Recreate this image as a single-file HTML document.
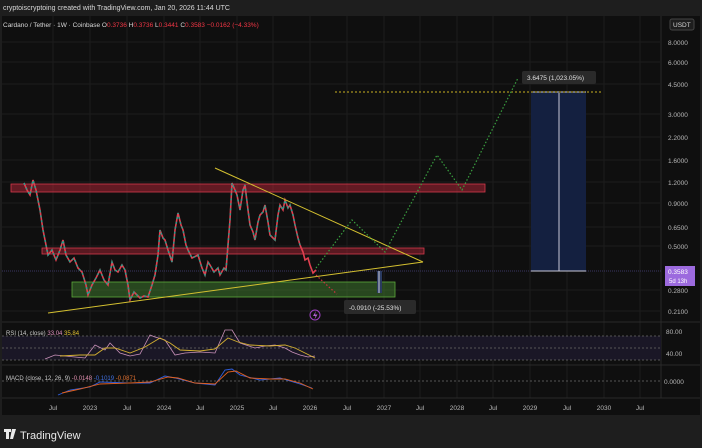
<!DOCTYPE html>
<html><head><meta charset="utf-8"><style>
body{margin:0;width:702px;height:448px;overflow:hidden;background:#1e1e1e;font-family:"Liberation Sans",sans-serif}
svg{display:block}
</style></head><body>
<svg width="702" height="448" viewBox="0 0 702 448" xmlns="http://www.w3.org/2000/svg" font-family="Liberation Sans, sans-serif">
<rect x="0" y="0" width="702" height="448" fill="#1e1e1e"/>
<text x="3" y="10" font-size="7" fill="#d8d8d8">cryptoiscryptoing created with TradingView.com, Jan 20, 2026 11:44 UTC</text>
<rect x="2" y="16" width="698" height="399" fill="#0f0f0f"/>
<g stroke="#1c1c1c" stroke-width="1">
<line x1="53" y1="16" x2="53" y2="398"/><line x1="90" y1="16" x2="90" y2="398"/><line x1="127" y1="16" x2="127" y2="398"/><line x1="164" y1="16" x2="164" y2="398"/><line x1="200" y1="16" x2="200" y2="398"/><line x1="237" y1="16" x2="237" y2="398"/><line x1="273" y1="16" x2="273" y2="398"/><line x1="310" y1="16" x2="310" y2="398"/><line x1="347" y1="16" x2="347" y2="398"/><line x1="384" y1="16" x2="384" y2="398"/><line x1="420" y1="16" x2="420" y2="398"/><line x1="457" y1="16" x2="457" y2="398"/><line x1="493" y1="16" x2="493" y2="398"/><line x1="530" y1="16" x2="530" y2="398"/><line x1="567" y1="16" x2="567" y2="398"/><line x1="604" y1="16" x2="604" y2="398"/><line x1="640" y1="16" x2="640" y2="398"/>
<line x1="2" y1="42" x2="660" y2="42"/><line x1="2" y1="62" x2="660" y2="62"/><line x1="2" y1="84" x2="660" y2="84"/><line x1="2" y1="114" x2="660" y2="114"/><line x1="2" y1="137" x2="660" y2="137"/><line x1="2" y1="160" x2="660" y2="160"/><line x1="2" y1="182" x2="660" y2="182"/><line x1="2" y1="203" x2="660" y2="203"/><line x1="2" y1="227" x2="660" y2="227"/><line x1="2" y1="246" x2="660" y2="246"/><line x1="2" y1="290" x2="660" y2="290"/><line x1="2" y1="311" x2="660" y2="311"/>
</g>
<line x1="2" y1="322" x2="700" y2="322" stroke="#2a2a2a"/>
<line x1="2" y1="365" x2="700" y2="365" stroke="#2a2a2a"/>
<line x1="2" y1="398" x2="700" y2="398" stroke="#2a2a2a"/>
<line x1="661" y1="16" x2="661" y2="398" stroke="#2a2a2a"/>
<text x="3" y="27" font-size="6.5" fill="#d8d8d8">Cardano / Tether · 1W · Coinbase  O<tspan fill="#f23645">0.3736</tspan>  H<tspan fill="#f23645">0.3736</tspan>  L<tspan fill="#f23645">0.3441</tspan>  C<tspan fill="#f23645">0.3583  −0.0162 (−4.33%)</tspan></text>
<rect x="670" y="19" width="24" height="11" rx="2" fill="#1e1e1e" stroke="#444"/>
<text x="673" y="27" font-size="6.5" fill="#d8d8d8">USDT</text>
<g font-size="6.5" fill="#b8b8b8">
<text x="668" y="45">8.0000</text><text x="668" y="65">6.0000</text><text x="668" y="87">4.5000</text><text x="668" y="117">3.0000</text><text x="668" y="140">2.2000</text><text x="668" y="163">1.6000</text><text x="668" y="185">1.2000</text><text x="668" y="206">0.9000</text><text x="668" y="230">0.6500</text><text x="668" y="249">0.5000</text><text x="668" y="293">0.2800</text><text x="668" y="314">0.2100</text>
<text x="666" y="334">80.00</text><text x="666" y="356">40.00</text><text x="664" y="384">0.0000</text>
</g>
<rect x="665" y="266" width="30" height="20" fill="#9c6ade"/>
<text x="668" y="274" font-size="6.5" fill="#fff">0.3583</text><text x="669" y="283" font-size="6" fill="#fff">5d 13h</text>
<line x1="2" y1="271" x2="661" y2="271" stroke="#3a3560" stroke-dasharray="1,1"/>
<rect x="11" y="184" width="474" height="8" fill="rgba(200,40,60,0.45)" stroke="#d4394b" stroke-width="0.8"/>
<rect x="42" y="248" width="382" height="6" fill="rgba(200,40,60,0.4)" stroke="#d4394b" stroke-width="0.8"/>
<rect x="72" y="282" width="323" height="15" fill="rgba(70,140,50,0.45)" stroke="#5caa3a" stroke-width="0.8"/>
<rect x="531" y="92" width="55" height="179" fill="#142040"/>
<line x1="559" y1="93" x2="559" y2="271" stroke="#c8c8d8" stroke-width="1"/>
<line x1="531" y1="92" x2="586" y2="92" stroke="#c8c8d8"/><line x1="531" y1="271" x2="586" y2="271" stroke="#c8c8d8"/>
<line x1="335" y1="92" x2="603" y2="92" stroke="#c8b020" stroke-dasharray="2,2"/>
<polyline fill="none" stroke="#e04050" stroke-width="1.6" points="24,183 27,190 30,195 33,180 36,190 40,210 43,230 45,240 48,255 52,250 56,260 60,250 63,240 66,255 70,262 74,258 78,268 82,272 86,285 88,295 92,285 96,278 100,270 104,280 108,285 112,262 115,270 118,272 122,265 125,270 128,285 130,300 134,292 140,298 144,296 148,297 152,285 155,275 158,255 160,230 163,238 165,240 168,250 172,262 175,230 178,213 181,225 183,230 186,245 188,250 192,258 198,255 202,268 205,275 208,262 210,265 214,272 218,268 220,275 224,268 226,270 228,245 230,220 232,183 235,190 237,195 240,210 243,190 245,185 248,210 250,225 253,232 255,240 258,222 260,215 263,212 265,205 268,222 270,235 273,238 275,240 278,215 280,205 283,210 285,200 288,208 290,205 293,215 295,225 298,238 300,245 303,252 305,260 308,258 310,265 313,273 316,270"/>
<polyline fill="none" stroke="#1fa38f" stroke-width="1.4" stroke-dasharray="2,3" points="24,183 27,190 30,195 33,180 36,190 40,210 43,230 45,240 48,255 52,250 56,260 60,250 63,240 66,255 70,262 74,258 78,268 82,272 86,285 88,295 92,285 96,278 100,270 104,280 108,285 112,262 115,270 118,272 122,265 125,270 128,285 130,300 134,292 140,298 144,296 148,297 152,285 155,275 158,255 160,230 163,238 165,240 168,250 172,262 175,230 178,213 181,225 183,230 186,245 188,250 192,258 198,255 202,268 205,275 208,262 210,265 214,272 218,268 220,275 224,268 226,270 228,245 230,220 232,183 235,190 237,195 240,210 243,190 245,185 248,210 250,225 253,232 255,240 258,222 260,215 263,212 265,205 268,222 270,235 273,238 275,240 278,215 280,205 283,210 285,200 288,208 290,205 293,215 295,225 298,238 300,245"/>
<line x1="215" y1="168" x2="423" y2="262" stroke="#d4c030" stroke-width="1"/>
<line x1="48" y1="313" x2="423" y2="262" stroke="#d4c030" stroke-width="1"/>
<polyline fill="none" stroke="#3aa040" stroke-width="1.2" stroke-dasharray="1.5,2" points="316,268 352,220 385,252 437,155 462,190 518,78"/>
<polyline fill="none" stroke="#d03040" stroke-width="1.2" stroke-dasharray="1.5,2" points="316,275 330,288 337,294"/>
<rect x="377" y="271" width="5" height="22" fill="#2a3a60"/>
<line x1="379" y1="271" x2="379" y2="293" stroke="#d0d0e0"/>
<rect x="344" y="300" width="72" height="14" rx="2" fill="#2a2a2a"/>
<text x="349" y="310" font-size="6.5" fill="#e0e0e0">-0.0910 (-25.53%)</text>
<rect x="522" y="71" width="74" height="13" rx="2" fill="#2a2a2a"/>
<text x="527" y="80" font-size="6.5" fill="#e0e0e0">3.6475 (1,023.05%)</text>
<circle cx="315" cy="315" r="5" fill="none" stroke="#9c40c0" stroke-width="1"/>
<path d="M316 311l-3 5h2.5l-1 3.5 3-5h-2.5z" fill="#b060d0"/>
<rect x="2" y="336" width="659" height="24" fill="#1a1726"/>
<g stroke="#555" stroke-dasharray="2,2"><line x1="2" y1="336" x2="661" y2="336"/><line x1="2" y1="348" x2="661" y2="348"/><line x1="2" y1="360" x2="661" y2="360"/><line x1="2" y1="381" x2="661" y2="381"/></g>
<text x="6" y="335" font-size="6" fill="#c8c8c8">RSI (14, close) <tspan fill="#e090c0">33.04</tspan> <tspan fill="#e0c030">35.84</tspan></text>
<polyline fill="none" stroke="#c890b8" stroke-width="0.8" points="45,359 55,355 65,356 75,357 85,358 95,345 105,350 110,343 120,353 130,356 140,354 150,335 155,337 165,340 175,355 185,353 200,352 215,353 225,330 232,330 240,343 255,348 265,346 275,345 285,348 292,352 300,355 308,357 315,356"/>
<polyline fill="none" stroke="#d4b030" stroke-width="0.9" points="60,356 80,355 95,355 105,348 115,348 130,353 145,347 160,338 170,343 180,350 200,351 215,349 228,338 238,342 250,345 270,346 285,345 295,348 305,353 315,358"/>
<text x="6" y="380" font-size="6" fill="#c8c8c8">MACD (close, 12, 26, 9) <tspan fill="#e090b0">-0.0148</tspan> <tspan fill="#4070e0">-0.1019</tspan> <tspan fill="#e07030">-0.0871</tspan></text>
<polyline fill="none" stroke="#3060e0" stroke-width="0.9" points="58,395 70,390 90,387 100,382 130,383 150,383 165,376 175,378 195,383 215,385 225,370 232,369 240,375 260,380 280,378 300,384 312,388"/>
<polyline fill="none" stroke="#e06020" stroke-width="0.9" points="62,393 80,389 100,384 130,383 150,382 168,377 178,378 195,383 215,384 228,372 236,371 250,378 270,379 285,379 300,383 313,389"/>
<g font-size="6.5" fill="#b8b8b8" text-anchor="middle">
<text x="53" y="410">Jul</text><text x="90" y="410">2023</text><text x="127" y="410">Jul</text><text x="164" y="410">2024</text><text x="200" y="410">Jul</text><text x="237" y="410">2025</text><text x="273" y="410">Jul</text><text x="310" y="410">2026</text><text x="347" y="410">Jul</text><text x="384" y="410">2027</text><text x="420" y="410">Jul</text><text x="457" y="410">2028</text><text x="493" y="410">Jul</text><text x="530" y="410">2029</text><text x="567" y="410">Jul</text><text x="604" y="410">2030</text><text x="640" y="410">Jul</text>
</g>
<path d="M4 429h7v3h-2v7h-3v-7h-2z M12 429h4l-3 10h-3z" fill="#e8e8e8"/>
<text x="20" y="439" font-size="11" fill="#e8e8e8">TradingView</text>
</svg>
</body></html>
